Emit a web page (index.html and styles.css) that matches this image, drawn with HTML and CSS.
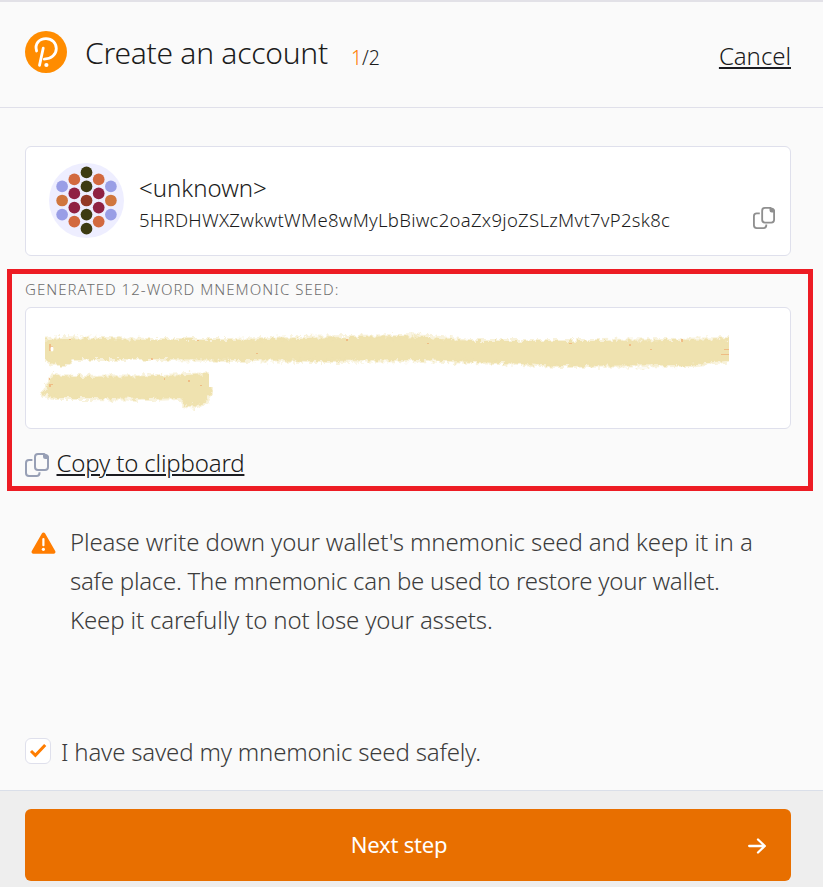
FILE: index.html
```html
<!DOCTYPE html>
<html lang="en">
<head>
<meta charset="utf-8">
<title>Create an account</title>
<link rel="stylesheet" href="styles.css">
</head>
<body>
<svg class="defs" width="0" height="0" aria-hidden="true">
  <symbol id="copy" viewBox="0 0 24 24">
    <g fill="none" stroke="currentColor" stroke-width="2" stroke-linecap="butt" stroke-linejoin="round">
      <path d="M7.4 7H4a3 3 0 0 0-3 3v10a3 3 0 0 0 3 3h7.5a3 3 0 0 0 3-3v-.8"/>
      <path d="M13 1h6.2L23 4.8V14a3 3 0 0 1-3 3h-7a3 3 0 0 1-3-3V4a3 3 0 0 1 3-3z"/>
    </g>
    <path fill="currentColor" d="M18 1h2a3.500 3.500 0 0 1 4 4v1h-3.500A2.500 2.500 0 0 1 18 3.500z"/>
  </symbol>
</svg>
<header class="header">
  <svg class="logo" viewBox="0 0 42 42">
    <circle cx="21" cy="21" r="21" fill="#ff8c00"/>
    <g fill="none" stroke="#fff" stroke-width="2.800" stroke-linecap="round">
      <path d="M11.600 20C9.300 12.500 14.500 7.600 21 7.600c6 0 10.300 4.500 10.300 9.900 0 6.200-5 10.400-12 10.600"/>
      <path d="M18.200 17.200L14.500 34.400"/>
    </g>
    <circle cx="21.400" cy="34" r="2.100" fill="#fff"/>
  </svg>
  <h1 class="title">Create an account</h1>
  <span class="steps"><span class="current">1</span>/2</span>
  <a class="cancel link">Cancel</a>
</header>
<main class="main">
  <section class="account">
    <svg class="identicon" viewBox="0 0 64 64">
      <circle cx="32" cy="32" r="32" fill="#eeeeff"/>
      <g fill="#3d3b12"><circle cx="32" cy="8" r="5"/><circle cx="32" cy="20" r="5"/><circle cx="32" cy="44" r="5"/><circle cx="32" cy="56" r="5"/></g>
      <g fill="#d2693f"><circle cx="21.600" cy="14" r="5"/><circle cx="42.400" cy="14" r="5"/><circle cx="21.600" cy="50" r="5"/><circle cx="42.400" cy="50" r="5"/></g>
      <g fill="#999ee6"><circle cx="11.200" cy="20" r="5"/><circle cx="52.800" cy="20" r="5"/><circle cx="11.200" cy="44" r="5"/><circle cx="52.800" cy="44" r="5"/></g>
      <g fill="#d0763e"><circle cx="11.200" cy="32" r="5"/><circle cx="52.800" cy="32" r="5"/></g>
      <g fill="#902143"><circle cx="21.600" cy="26" r="5"/><circle cx="42.400" cy="26" r="5"/><circle cx="21.600" cy="38" r="5"/><circle cx="42.400" cy="38" r="5"/></g>
      <circle cx="32" cy="32" r="5" fill="#923926"/>
    </svg>
    <div class="details">
      <div class="name">&lt;unknown&gt;</div>
      <div class="address">5HRDHWXZwkwtWMe8wMyLbBiwc2oaZx9joZSLzMvt7vP2sk8c</div>
    </div>
    <svg class="copy-address"><use href="#copy"/></svg>
  </section>
  <section class="seed">
    <div class="label">GENERATED 12-WORD MNEMONIC SEED:</div>
    <div class="phrase">
      <svg class="scribble" viewBox="26 308 764 120">
        <defs>
          <filter id="rough" x="-5%" y="-20%" width="110%" height="140%">
            <feTurbulence type="fractalNoise" baseFrequency="0.22" numOctaves="3" seed="4"/>
            <feDisplacementMap in="SourceGraphic" scale="8" xChannelSelector="R" yChannelSelector="G"/>
            <feGaussianBlur stdDeviation="0.6"/>
          </filter>
          <clipPath id="ends"><path d="M45 320H729V370H45zM40 370H209V387H213V415H40z"/></clipPath>
        </defs>
        <g clip-path="url(#ends)">
          <g filter="url(#rough)" fill="#efe2af" stroke="#efe2af" stroke-linejoin="round">
            <g stroke-opacity=".45" stroke-width="4">
              <path d="M40 340L60 338 150 340 230 340 300 338 400 336 430 337 470 341 600 341 735 339V360L715 362 690 365 560 366 500 363 420 360 320 361 150 359 73 359 67 365 58 365 40 359z"/>
              <path d="M53 375L75 377 160 376 215 374 212 392 206 402 196 407 184 405 181 398 150 399 90 398 55 398 43 394 49 383z"/>
            </g>
          </g>
          <g fill="#efad72" opacity=".7"><path d="M49 344h2v2h2v1h-2v4h-2z"/><path d="M69 339h2v1h-2zM197 340h2v1h-2zM151 358h2v2h-2zM256 353h2v1h-2zM346 339h2v2h-2zM427 343h2v1h-2zM569 343h3v1h-3zM629 344h2v2h-2zM650 349h2v1h-2zM681 339h2v3h-2zM724 349h5v1h-5zM721 354h8v1h-8zM49 384h4v1h-2v2h-2zM49 378h1v2h-1zM188 380h2v2h-2zM164 378h1v2h-1zM200 385h2v1h-2z"/></g>
          <ellipse cx="52" cy="349" rx="1.500" ry="2.500" fill="#fff"/>
        </g>
      </svg>
    </div>
    <div class="copy-row"><svg class="copy-seed"><use href="#copy"/></svg><a class="copy-link link">Copy to clipboard</a></div>
  </section>
  <section class="warning">
    <svg class="triangle" viewBox="0 0 25 22">
      <path d="M11 1.200a1.800 1.800 0 0 1 3 0L24.200 19a1.800 1.800 0 0 1-1.500 2.700H2.300A1.800 1.800 0 0 1 .8 19z" fill="#ff7d01"/>
      <path d="M12.400 7v6.200" stroke="#fff" stroke-width="2.200" stroke-linecap="round"/><circle cx="12.400" cy="17.300" r="1.600" fill="#fff"/>
    </svg>
    <p class="message"><span class="first">Please write down your wallet's mnemonic seed and keep it in a</span><br><span class="second">safe place. The mnemonic can be used to restore your wallet.</span><br>Keep it carefully to not lose your assets.</p>
  </section>
  <label class="confirm">
    <span class="box"><svg class="check" viewBox="0 0 18 15"><path d="M2 8l4.400 4.300L16.200 2" fill="none" stroke="#ff7d01" stroke-width="3"/></svg></span>
    <span class="confirm-text">I have saved my mnemonic seed safely.</span>
  </label>
</main>
<footer class="footer">
  <button class="next"><span class="next-text">Next step</span><svg class="arrow" viewBox="0 0 18 16"><path d="M1.200 8h15M10 1.500L16.800 8 10 14.500" fill="none" stroke="#fff" stroke-width="2.300" stroke-linecap="round" stroke-linejoin="round"/></svg></button>
</footer>
</body>
</html>
```

FILE: styles.css
```css
* { box-sizing: border-box; }
body {
  margin: 0;
  height: 887px;
  overflow: hidden;
  display: flex;
  flex-direction: column;
  background: #fafafa;
  color: #1c1c1c;
  font: 300 24px "Noto Sans", sans-serif;
}
svg { display: block; flex: none; }
.defs { display: none; }
.link {
  color: #1a1b20;
  text-decoration: underline;
  text-decoration-thickness: 2px;
  text-underline-offset: 2px;
}
.header {
  display: flex;
  height: 108px;
  padding: 29px 32px 0 25px;
  border-top: 2px solid #e2e1e7;
  border-bottom: 1px solid #e0e0ea;
  line-height: 42px;
}
.logo { width: 42px; height: 42px; }
.title {
  margin: 1px 0 0 18px;
  font-size: 30px;
  font-weight: 300;
  letter-spacing: -0.25px;
}
.steps { margin: 6px 0 0 23px; font-size: 19.500px; }
.current { color: #ff7d01; }
.cancel { margin: 4px 0 0 auto; letter-spacing: -0.05px; }
.main { flex: none; height: 682px; padding: 38px 32px 0 25px; }
.account {
  display: flex;
  height: 110px;
  padding: 16px 15px 0 23px;
  border: 1px solid #dfe0ec;
  border-radius: 6px;
  background: #fff;
}
.identicon { width: 75px; height: 75px; }
.details { margin-left: 15px; }
.name { padding-top: 9px; line-height: 32px; }
.address {
  font-size: 18.500px;
  line-height: 31px;
  letter-spacing: 0.28px;
}
.copy-address { width: 22px; height: 22px; margin: 44px 0 0 auto; color: #8f8f8f; }
.seed {
  height: 222px;
  margin: 13px -22px 0 -18px;
  padding: 0 17px 0 13px;
  border: 5px solid #ed1c24;
}
.label {
  margin-bottom: 2px;
  font-size: 15px;
  line-height: 31px;
  letter-spacing: 1.030px;
  color: #6e6e6e;
}
.phrase {
  height: 122px;
  border: 1px solid #dfe0ec;
  border-radius: 6px;
  background: #fff;
}
.scribble { width: 764px; height: 120px; }
.copy-row { display: flex; margin-top: 14px; line-height: 40px; }
.copy-seed { width: 24px; height: 24px; margin: 10px 8px 0 0; color: #979fb5; }
.copy-link { margin-left: -0.5px; letter-spacing: -0.17px; }
.warning { display: flex; margin-top: 31px; color: #3c3c3c; }
.triangle { width: 25px; height: 22px; margin: 10px 14px 0 6px; }
.message { margin: 0; line-height: 39px; letter-spacing: -0.16px; white-space: nowrap; }
.first { letter-spacing: -0.12px; }
.second { letter-spacing: -0.25px; }
.confirm {
  display: flex;
  margin-top: 99px;
  gap: 10px;
  line-height: 26px;
  letter-spacing: -0.19px;
  color: #3c3c3c;
}
.confirm-text { padding-top: 1px; }
.box {
  width: 26px;
  height: 26px;
  padding: 4px 3px;
  border: 1px solid #dfe0ec;
  border-radius: 6px;
  background: #fff;
}
.check { width: 18px; height: 15px; }
.footer {
  flex: 1;
  padding: 18px 32px 0 25px;
  border-top: 1px solid #dadfe9;
  background: #eee;
}
.next {
  display: flex;
  justify-content: center;
  align-items: center;
  position: relative;
  width: 100%;
  height: 72px;
  padding: 0 18px 3px 0;
  border: 0;
  border-radius: 6px;
  background: #e86f00;
  color: #fff;
  font: 400 22px "Noto Sans", sans-serif;
  letter-spacing: -0.2px;
}
.arrow { position: absolute; right: 25px; top: 29px; width: 18px; height: 16px; }
```
